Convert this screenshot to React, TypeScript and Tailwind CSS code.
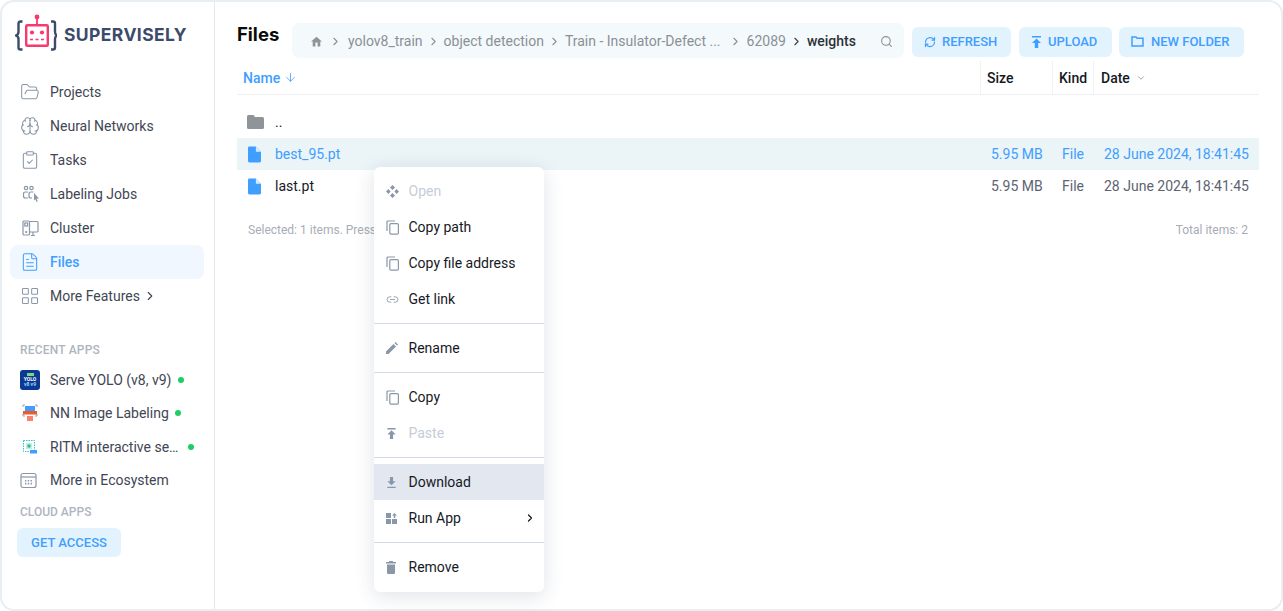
import { ReactNode } from 'react';
import { ChevronDown, ChevronRight, Search, ArrowDown, RefreshCw, FolderOpen, Brain, ClipboardCheck, FileText, LayoutGrid, Link2 } from 'lucide-react';

function Logo() {
    return (
        <svg width="42" height="38" viewBox="0 0 42 38" fill="none" className="shrink-0">
            <path d="M7.5 8.5H5.5Q3.5 8.5 3.5 10.5V19Q3.5 21.5 1 22.5Q3.5 23.5 3.5 26V34.5Q3.5 36.5 5.5 36.5H7.5" stroke="#3c4b6b" strokeWidth="2.4" />
            <path d="M36 8.5H38Q40 8.5 40 10.5V19Q40 21.5 42 22.5Q40 23.5 40 26V34.5Q40 36.5 38 36.5H36" stroke="#3c4b6b" strokeWidth="2.4" />
            <rect x="11.2" y="12.2" width="21.6" height="20.6" rx="1" stroke="#f7396f" strokeWidth="2.4" />
            <path d="M22 4V12" stroke="#f7396f" strokeWidth="1.8" />
            <circle cx="22" cy="4" r="2.4" fill="#f7396f" />
            <circle cx="17" cy="19.5" r="2.1" fill="#f7396f" />
            <circle cx="27" cy="19.5" r="2.1" fill="#f7396f" />
            <path d="M15 26.5H29" stroke="#f7396f" strokeWidth="1.6" strokeDasharray="3 2.5" />
        </svg>
    );
}

function LabelingIcon() {
    return (
        <svg width="18" height="18" viewBox="0 0 18 18" fill="none" stroke="#8a97a8" strokeWidth="1.2">
            <circle cx="4" cy="3" r="1.7" />
            <circle cx="9.5" cy="3" r="1.7" />
            <path d="M6 7H3.5Q1.5 7 1.5 9V11Q1.5 13 3.5 13H6" />
            <path d="M11.5 7H9Q7 7 7 9V11Q7 13 9 13H10" />
            <path d="M12 8L17 13.5H14.6L15.8 16.6L14.6 17L13.4 14.2L12 15.6Z" fill="#8a97a8" stroke="none" />
        </svg>
    );
}

function ClusterIcon() {
    return (
        <svg width="17" height="17" viewBox="0 0 17 17" fill="none" stroke="#8a97a8" strokeWidth="1.2">
            <rect x="1" y="1" width="6.5" height="14" rx="1" />
            <rect x="2.8" y="3" width="2.8" height="3" />
            <circle cx="4.2" cy="12" r="0.5" fill="#8a97a8" />
            <path d="M7.5 1.5H15Q16 1.5 16 2.5V11Q16 12 15 12H7.5M11 12V15.5M9 15.5H13" />
        </svg>
    );
}

function EcosystemIcon() {
    return (
        <svg width="17" height="17" viewBox="0 0 17 17" fill="none" stroke="#8a97a8" strokeWidth="1.2">
            <rect x="1" y="1.5" width="15" height="14" rx="2" />
            <path d="M1 5H16" />
            <path d="M5 8.8H6.4M7.8 8.8H9.2M10.6 8.8H12M5 11.6H6.4M7.8 11.6H9.2M10.6 11.6H12" strokeWidth="1.6" />
        </svg>
    );
}

function CopyIcon() {
    return (
        <svg width="14" height="15" viewBox="0 0 14 15" fill="none" stroke="#8a97a8" strokeWidth="1.2">
            <path d="M9 1H2Q1 1 1 2V11" />
            <rect x="3.8" y="3.6" width="8.6" height="10.6" rx="1.2" />
        </svg>
    );
}

function FileIcon({ color = '#3f9eff' }: { color?: string }) {
    return (
        <svg width="13" height="17" viewBox="0 0 14 17">
            <path d="M1.5 0H8.5L14 5.5V15.5Q14 17 12.5 17H1.5Q0 17 0 15.5V1.5Q0 0 1.5 0Z" fill={color} />
            <path d="M8.5 0V5.5H14Z" fill="#d8ecff" />
        </svg>
    );
}

function YoloBadge() {
    return (
        <div className="w-5 h-5 rounded-[3px] bg-[#0b3a94] flex flex-col items-center justify-center text-white leading-none font-bold">
            <div className="w-[7px] h-[3px] bg-[#7fd67f] mb-[1px]" />
            <span className="text-[5px]">YOLO</span>
            <span className="text-[5px] text-[#9ad7ff]">v8 v9</span>
        </div>
    );
}

function NnBadge() {
    return (
        <svg width="20" height="18" viewBox="0 0 20 18" fill="none">
            <path d="M3 3V1H5M15 1H17V3M3 10V12H5M15 12H17V10" stroke="#9aa5b1" />
            <rect x="5" y="2" width="10" height="5" fill="#3f9eff" />
            <rect x="3" y="7" width="14" height="3.5" fill="#f05a28" />
            <rect x="7" y="12" width="6" height="5" fill="#f8856b" />
        </svg>
    );
}

function RitmBadge() {
    return (
        <svg width="20" height="16" viewBox="0 0 20 16" fill="none">
            <rect x="3.5" y="1.5" width="11" height="11" stroke="#25c6d8" strokeDasharray="1.5 1" />
            <rect x="6" y="4" width="6" height="6" fill="#bdeee8" />
            <circle cx="9" cy="7" r="1.7" fill="#3fb58a" />
            <rect x="10" y="11" width="7" height="3.5" fill="#3f9eff" />
        </svg>
    );
}

function NavItem({ icon, label, active, trailing }: { icon: ReactNode; label: string; active?: boolean; trailing?: ReactNode }) {
    return (
        <div className={`h-[34px] ml-2 mr-[10px] pl-3 rounded-lg flex items-center text-sm ${active ? 'bg-[#f0f7fe] text-[#3f9eff] font-medium' : 'text-[#3f4654]'}`}>
            <span className="w-[28px] flex items-center shrink-0">{icon}</span>
            <span>{label}</span>
            {trailing}
        </div>
    );
}

function AppItem({ icon, label, dotClass }: { icon: ReactNode; label: string; dotClass: string }) {
    return (
        <div className="h-[33.5px] pl-[18px] flex items-center text-sm text-[#3f4654]">
            <span className="w-[30px] shrink-0 flex items-center">{icon}</span>
            <span className="whitespace-nowrap">{label}</span>
            <span className={`w-[6px] h-[6px] rounded-full bg-[#1ccf62] ${dotClass}`} />
        </div>
    );
}

function ActionButton({ icon, label, width }: { icon: ReactNode; label: string; width: string }) {
    return (
        <button className={`h-[30px] pl-3 rounded-md bg-[#e3f3fe] text-[#3f9eff] text-[13px] font-medium flex items-center gap-[6px] ${width}`}>
            {icon}
            {label}
        </button>
    );
}

function MenuItem({ icon, label, disabled, active, trailing }: { icon: ReactNode; label: string; disabled?: boolean; active?: boolean; trailing?: ReactNode }) {
    return (
        <div className={`h-9 pl-3 pr-2 flex items-center text-sm ${disabled ? 'text-[#c5cdd9]' : 'text-[#16191f]'} ${active ? 'bg-[#e2e7f0]' : ''}`}>
            <span className="w-[22.5px] shrink-0 flex items-center">{icon}</span>
            <span className="flex-1">{label}</span>
            {trailing}
        </div>
    );
}

function MenuDivider() {
    return <div className="h-px bg-[#d3dce6] my-[6px]" />;
}

const navIcon = 'w-[20px] h-[20px] -ml-[2px] text-[#8a97a8]';

export default function App() {
    return (
        <div className="w-[1283px] h-[611px] relative overflow-hidden bg-white font-['Roboto',sans-serif]">
            <div className="h-full border-2 border-[#e8eef2] rounded-[14px] flex bg-white">
                <aside className="w-[213px] shrink-0 border-r border-[#e4e9ee] flex flex-col">
                    <div className="h-[67px] pl-[13px] pt-[11px] flex items-start">
                        <Logo />
                        <span className="ml-[7px] mt-[12px] text-[17.5px] font-bold tracking-[0.4px] text-[#3c4b6b] leading-5 font-['Inter',sans-serif]">SUPERVISELY</span>
                    </div>
                    <div className="pt-[6px]">
                        <NavItem icon={<FolderOpen className={navIcon} strokeWidth={1.25} />} label="Projects" />
                        <NavItem icon={<Brain className={navIcon} strokeWidth={1.25} />} label="Neural Networks" />
                        <NavItem icon={<ClipboardCheck className={navIcon} strokeWidth={1.25} />} label="Tasks" />
                        <NavItem icon={<LabelingIcon />} label="Labeling Jobs" />
                        <NavItem icon={<ClusterIcon />} label="Cluster" />
                        <NavItem icon={<FileText className="w-[20px] h-[20px] -ml-[2px] text-[#3f9eff]" strokeWidth={1.25} />} label="Files" active />
                        <NavItem icon={<LayoutGrid className={navIcon} strokeWidth={1.25} />} label="More Features" trailing={<ChevronRight className="w-[14px] h-[14px] ml-[3px] text-[#3f4654]" />} />
                    </div>
                    <div className="pl-[18px] mt-[29px] mb-[5px] text-xs font-medium text-[#aeb5c0] leading-4 tracking-[0.2px]">RECENT APPS</div>
                    <AppItem icon={<YoloBadge />} label="Serve YOLO (v8, v9)" dotClass="ml-[7px]" />
                    <AppItem icon={<NnBadge />} label="NN Image Labeling" dotClass="ml-[6px]" />
                    <AppItem icon={<RitmBadge />} label="RITM interactive se…" dotClass="ml-[10px]" />
                    <AppItem icon={<EcosystemIcon />} label="More in Ecosystem" dotClass="hidden" />
                    <div className="pl-[18px] mt-[7px] text-xs font-medium text-[#aeb5c0] leading-4">CLOUD APPS</div>
                    <button className="ml-[15px] mt-2 w-[104px] h-[29px] rounded-md bg-[#e3f3fe] text-[#3f9eff] text-[13px] font-medium">GET ACCESS</button>
                </aside>
                <main className="flex-1 min-w-0 pl-[22px] pr-[22px]">
                    <div className="h-[35px] mt-[21px] flex items-center">
                        <h1 className="w-[55px] text-[18.5px] font-bold text-[#0a0a0a] font-['Inter',sans-serif] -mt-[12px]">Files</h1>
                        <div className="w-[612px] h-[35px] rounded-lg bg-[#f4f9fc] flex items-center pl-[18px] pr-[11px] pt-[1px] text-sm text-[#8b9097]">
                            <svg width="13" height="13" viewBox="0 0 24 24" fill="#8f949a"><path d="M10 21v-7h4v7h5v-9h3L12 3 2 12h3v9z" /></svg>
                            <ChevronRight className="w-[13px] h-[13px] mx-[6px] text-[#8b9097]" />
                            <span>yolov8_train</span>
                            <ChevronRight className="w-[13px] h-[13px] mx-[4px] text-[#8b9097]" />
                            <span>object detection</span>
                            <ChevronRight className="w-[13px] h-[13px] mx-[4px] text-[#8b9097]" />
                            <span>Train - Insulator-Defect ...</span>
                            <ChevronRight className="w-[13px] h-[13px] ml-[8px] mr-[5px] text-[#8b9097]" />
                            <span>62089</span>
                            <ChevronRight className="w-[13px] h-[13px] mx-[4px] text-[#3b3f46]" />
                            <span className="font-medium text-[#2e3138]">weights</span>
                            <Search className="w-[13px] h-[13px] ml-auto text-[#8b9097]" />
                        </div>
                        <div className="flex gap-2 ml-2 mt-[2px]">
                            <ActionButton width="w-[99px]" icon={<RefreshCw className="w-[12px] h-[12px]" strokeWidth={2.5} />} label="REFRESH" />
                            <ActionButton width="w-[93px]" icon={<svg width="11" height="12" viewBox="0 0 11 12" fill="currentColor"><path d="M1 0H10V1.5H1ZM5.5 2.5L10 7H7.2V12H3.8V7H1Z" /></svg>} label="UPLOAD" />
                            <ActionButton width="w-[125px] -ml-px" icon={<svg width="13" height="11" viewBox="0 0 13 11" fill="none" stroke="currentColor" strokeWidth="1.5" className="mr-px"><path d="M1 1H5L6 2.2H12V10H1Z" /></svg>} label="NEW FOLDER" />
                        </div>
                    </div>
                    <div className="h-[37px] pt-[3px] flex items-center border-b border-[#eef0f3] text-sm font-medium text-[#16191f]">
                        <div className="flex-1 pl-[6px] flex items-center gap-1 text-[#3f9eff]">Name <ArrowDown className="w-[13px] h-[13px]" strokeWidth={1.5} /></div>
                        <div className="w-[72px] h-full pl-[6px] flex items-center border-l border-[#f0f2f4]">Size</div>
                        <div className="w-[41px] h-full pl-[6px] flex items-center border-l border-[#f0f2f4]">Kind</div>
                        <div className="w-[166px] h-full pl-[7px] flex items-center gap-1 border-l border-[#f0f2f4]">Date <ChevronDown className="w-[10px] h-[10px] ml-[2px] text-[#8b9097]" /></div>
                    </div>
                    <div className="mt-[11px] text-sm">
                        <div className="h-8 flex items-center pl-[10px]">
                            <svg width="17" height="14" viewBox="0 0 17 14" fill="#8f9498"><path d="M1.5 0H6.5L8 2H15.5Q17 2 17 3.5V12.5Q17 14 15.5 14H1.5Q0 14 0 12.5V1.5Q0 0 1.5 0Z" /></svg>
                            <span className="ml-[11px] text-[#16191f]">..</span>
                        </div>
                        <div className="h-8 flex items-center pl-[11px] bg-[#ebf4f7] text-[#3f9eff]">
                            <FileIcon />
                            <span className="ml-[14px] flex-1">best_95.pt</span>
                            <span className="w-[71px]">5.95 MB</span>
                            <span className="w-[42px]">File</span>
                            <span className="w-[155px]">28 June 2024, 18:41:45</span>
                        </div>
                        <div className="h-8 flex items-center pl-[11px] text-[#5c6472]">
                            <FileIcon />
                            <span className="ml-[14px] flex-1 text-[#16191f]">last.pt</span>
                            <span className="w-[71px]">5.95 MB</span>
                            <span className="w-[42px]">File</span>
                            <span className="w-[155px]">28 June 2024, 18:41:45</span>
                        </div>
                    </div>
                    <div className="mt-[20px] px-[11px] flex justify-between text-xs text-[#a7adb6]">
                        <span>Selected: 1 items. Press</span>
                        <span>Total items: 2</span>
                    </div>
                </main>
            </div>
            <div className="absolute left-[374px] top-[167px] w-[170px] h-[425px] bg-white rounded-md shadow-[0_4px_20px_rgba(30,50,80,0.14)] pt-[6px]">
                <MenuItem disabled label="Open" icon={<svg width="13" height="13" viewBox="0 0 13 13" fill="#8a97a8"><path d="M6.5 0L9 2.5L6.5 5L4 2.5ZM6.5 8L9 10.5L6.5 13L4 10.5ZM0 6.5L2.5 4L4.5 6.5L2.5 9ZM13 6.5L10.5 9L8.5 6.5L10.5 4Z" /></svg>} />
                <MenuItem label="Copy path" icon={<CopyIcon />} />
                <MenuItem label="Copy file address" icon={<CopyIcon />} />
                <MenuItem label="Get link" icon={<Link2 className="w-[13px] h-[13px] text-[#8a97a8]" strokeWidth={1.6} />} />
                <MenuDivider />
                <MenuItem label="Rename" icon={<svg width="12" height="12" viewBox="0 0 12 12" fill="#8a97a8"><path d="M0 12V9.5L7.5 2L10 4.5L2.5 12ZM8.5 1L9.5 0L12 2.5L11 3.5Z" /></svg>} />
                <MenuDivider />
                <MenuItem label="Copy" icon={<CopyIcon />} />
                <MenuItem disabled label="Paste" icon={<svg width="11" height="11" viewBox="0 0 11 12" fill="#8a97a8"><path d="M1 0H10V1.5H1ZM5.5 2.5L10 7H7.2V12H3.8V7H1Z" /></svg>} />
                <MenuDivider />
                <MenuItem active label="Download" icon={<svg width="11" height="11" viewBox="0 0 11 12" fill="#8a97a8"><path d="M3.8 0H7.2V4.5H10L5.5 9L1 4.5H3.8ZM1 10.5H10V12H1Z" /></svg>} />
                <MenuItem label="Run App" icon={<svg width="11" height="11" viewBox="0 0 11 11" fill="#8a97a8"><rect width="5" height="5" /><rect y="6" width="5" height="5" /><rect x="6" y="6" width="5" height="5" /><path d="M8.5 0L11 2.5H9.3V5H7.7V2.5H6Z" /></svg>} trailing={<ChevronRight className="w-[12px] h-[12px] text-[#16191f]" strokeWidth={2.5} />} />
                <MenuDivider />
                <MenuItem label="Remove" icon={<svg width="10" height="13" viewBox="0 0 10 13" fill="#8a97a8"><path d="M3 0H7V1H10V2.5H0V1H3ZM1 3.5H9V12Q9 13 8 13H2Q1 13 1 12Z" /></svg>} />
            </div>
        </div>
    );
}
